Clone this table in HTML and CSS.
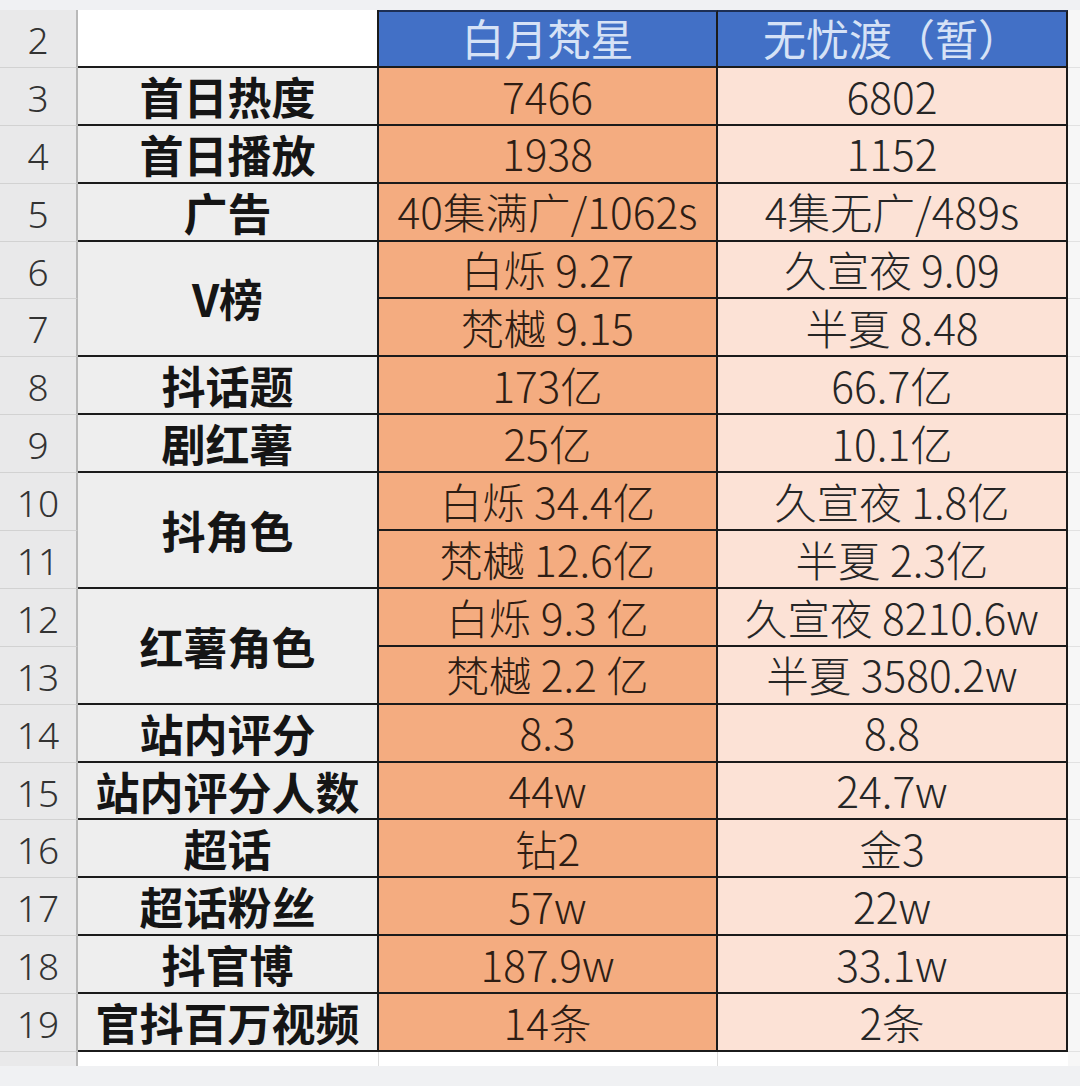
FILE: index.html
```html
<!DOCTYPE html>
<html lang="zh-CN">
<head>
<meta charset="utf-8">
<title>对比表</title>
<link rel="stylesheet" href="styles.css">
</head>
<body>
<div class="sheet">
  <div class="grid">
    <div class="num">2</div><div class="label blank"></div><div class="head">白月梵星</div><div class="head">无忧渡（暂）</div><div class="fill"></div>

    <div class="num">3</div><div class="label">首日热度</div><div class="c1">7466</div><div class="c2">6802</div><div class="fill"></div>
    <div class="num">4</div><div class="label">首日播放</div><div class="c1">1938</div><div class="c2">1152</div><div class="fill"></div>
    <div class="num">5</div><div class="label">广告</div><div class="c1">40集满广/1062s</div><div class="c2">4集无广/489s</div><div class="fill"></div>
    <div class="num">6</div><div class="label span2">V榜</div><div class="c1">白烁 9.27</div><div class="c2">久宣夜 9.09</div><div class="fill"></div>
    <div class="num">7</div><div class="c1">梵樾 9.15</div><div class="c2">半夏 8.48</div><div class="fill"></div>
    <div class="num">8</div><div class="label">抖话题</div><div class="c1">173亿</div><div class="c2">66.7亿</div><div class="fill"></div>
    <div class="num">9</div><div class="label">剧红薯</div><div class="c1">25亿</div><div class="c2">10.1亿</div><div class="fill"></div>
    <div class="num">10</div><div class="label span2">抖角色</div><div class="c1">白烁 34.4亿</div><div class="c2">久宣夜 1.8亿</div><div class="fill"></div>
    <div class="num">11</div><div class="c1">梵樾 12.6亿</div><div class="c2">半夏 2.3亿</div><div class="fill"></div>
    <div class="num">12</div><div class="label span2">红薯角色</div><div class="c1">白烁 9.3 亿</div><div class="c2">久宣夜 8210.6w</div><div class="fill"></div>
    <div class="num">13</div><div class="c1">梵樾 2.2 亿</div><div class="c2">半夏 3580.2w</div><div class="fill"></div>
    <div class="num">14</div><div class="label">站内评分</div><div class="c1">8.3</div><div class="c2">8.8</div><div class="fill"></div>
    <div class="num">15</div><div class="label">站内评分人数</div><div class="c1">44w</div><div class="c2">24.7w</div><div class="fill"></div>
    <div class="num">16</div><div class="label">超话</div><div class="c1">钻2</div><div class="c2">金3</div><div class="fill"></div>
    <div class="num">17</div><div class="label">超话粉丝</div><div class="c1">57w</div><div class="c2">22w</div><div class="fill"></div>
    <div class="num">18</div><div class="label">抖官博</div><div class="c1">187.9w</div><div class="c2">33.1w</div><div class="fill"></div>
    <div class="num">19</div><div class="label">官抖百万视频</div><div class="c1">14条</div><div class="c2">2条</div><div class="fill"></div>

    <div class="num tail"></div><div class="tailcell edge"></div><div class="tailcell edge"></div><div class="tailcell"></div><div class="fill tailfill"></div>
  </div>
</div>
</body>
</html>
```

FILE: styles.css
```css
html, body {
  margin: 0;
  padding: 0;
  background: #f0f1f3;
}

.sheet {
  padding-top: 10px;
  height: 1086px;
  box-sizing: border-box;
}

.grid {
  display: grid;
  grid-template-columns: 78px 301px 339px 350px 12px;
  grid-template-rows: repeat(18, 57.9px) 14px;
  background: #ffffff;
  font-family: "Noto Sans CJK SC", "Noto Sans", sans-serif;
  line-height: 1;
}

.grid > div {
  box-sizing: border-box;
  display: flex;
  align-items: center;
  justify-content: center;
  white-space: nowrap;
}

.num {
  background: #e9e9ea;
  border-right: 2px solid #b9b9b9;
  border-bottom: 1px solid #d2d2d2;
  color: #333333;
  font-family: "Noto Sans", "Liberation Sans", sans-serif;
  font-size: 37px;
  font-weight: 300;
  padding-top: 2px;
}

.label {
  background: #eeeeee;
  border-right: 2px solid #1b1b1b;
  border-bottom: 2px solid #1b1b1b;
  font-weight: 700;
  font-size: 44px;
  color: #151515;
}

.label.blank {
  background: #ffffff;
}

.span2 {
  grid-row: span 2;
}

.head {
  background: #4270c6;
  color: #d6e2f6;
  font-size: 43px;
  padding-bottom: 3px;
  border-top: 2px solid #1d2f55;
  border-right: 2px solid #1b1b1b;
  border-bottom: 2px solid #1b1b1b;
}

.c1 {
  background: #f4ac80;
  border-right: 2px solid #1b1b1b;
  border-bottom: 2px solid #1b1b1b;
  color: #2e1d14;
  font-size: 42.5px;
  font-weight: 300;
}

.c2 {
  background: #fce2d6;
  border-right: 2px solid #1b1b1b;
  border-bottom: 2px solid #1b1b1b;
  color: #262626;
  font-size: 42.5px;
  font-weight: 300;
}

.fill {
  background: #f7f7f7;
  border-bottom: 1px solid #e2e2e2;
}

.tail {
  border-bottom: none;
}

.tailcell {
  background: #ffffff;
}

.tailcell.edge {
  border-right: 1px solid #dddddd;
}

.tailfill {
  border-bottom: none;
}
```
